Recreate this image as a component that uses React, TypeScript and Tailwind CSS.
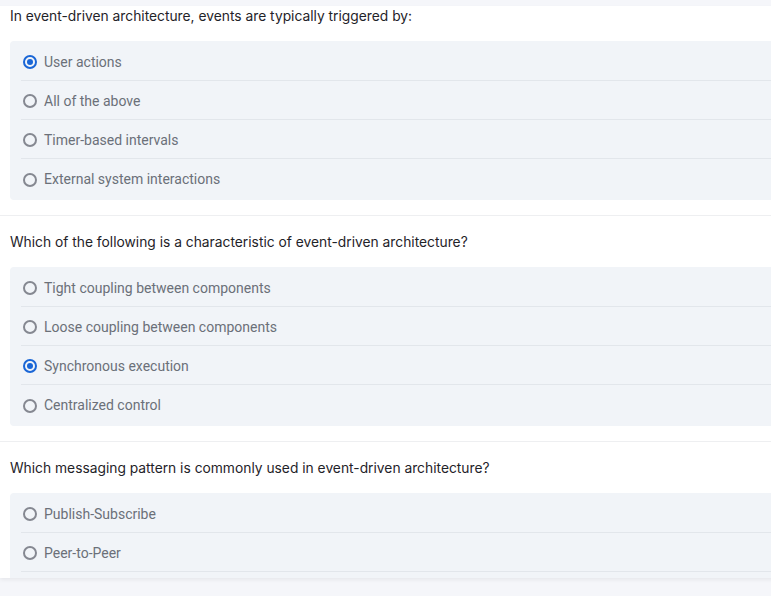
import React from "react";

type Q = { text: string; options: string[]; checked: number | null; first?: boolean; last?: boolean };

const questions: Q[] = [
  {
    text: "In event-driven architecture, events are typically triggered by:",
    options: ["User actions", "All of the above", "Timer-based intervals", "External system interactions"],
    checked: 0,
    first: true,
  },
  {
    text: "Which of the following is a characteristic of event-driven architecture?",
    options: [
      "Tight coupling between components",
      "Loose coupling between components",
      "Synchronous execution",
      "Centralized control",
    ],
    checked: 2,
  },
  {
    text: "Which messaging pattern is commonly used in event-driven architecture?",
    options: ["Publish-Subscribe", "Peer-to-Peer"],
    checked: null,
    last: true,
  },
];

function Radio({ checked }: { checked: boolean }) {
  return checked ? (
    <span className="flex h-[14px] w-[14px] shrink-0 items-center justify-center rounded-full border-2 border-[#1a66d6]">
      <span className="h-[6px] w-[6px] rounded-full bg-[#1a66d6]" />
    </span>
  ) : (
    <span className="h-[14px] w-[14px] shrink-0 rounded-full border-2 border-[#858891]" />
  );
}

export default function App() {
  return (
    <div className="h-[596px] w-[771px] overflow-hidden bg-[#f5f6fa]">
      <div className="mt-[6px] h-[572px] w-[800px] overflow-hidden bg-white shadow-[0_2px_4px_rgba(0,0,0,0.06)]">
        {questions.map((q, qi) => (
          <div
            key={qi}
            className={`border-b border-[#eeeff1] pb-[15px] pl-[10px] ${q.first ? "pt-0" : "pt-4"}`}
          >
            <div
              className="h-5 text-[13.8px] leading-5 text-[#1f2329]"
              style={{ fontFamily: "Inter, 'Noto Sans', sans-serif" }}
            >
              {q.text}
            </div>
            <div
              className={`mt-[15px] rounded-l-[4px] bg-[#f1f4f8] pl-[11px] pt-px ${q.last ? "pb-[60px]" : ""}`}
            >
              {q.options.map((o, oi) => {
                const bordered = q.last || oi < q.options.length - 1;
                return (
                  <div
                    key={oi}
                    className={`flex items-center gap-[7px] pl-[2px] ${
                      bordered ? "h-[39px] border-b border-[#e2e6eb] pt-[2px]" : "h-[41px] pt-0"
                    }`}
                  >
                    <Radio checked={q.checked === oi} />
                    <span
                      className="text-[14px] text-[#6b7079]"
                      style={{ fontFamily: "Roboto, 'Liberation Sans', sans-serif" }}
                    >
                      {o}
                    </span>
                  </div>
                );
              })}
            </div>
          </div>
        ))}
      </div>
    </div>
  );
}
